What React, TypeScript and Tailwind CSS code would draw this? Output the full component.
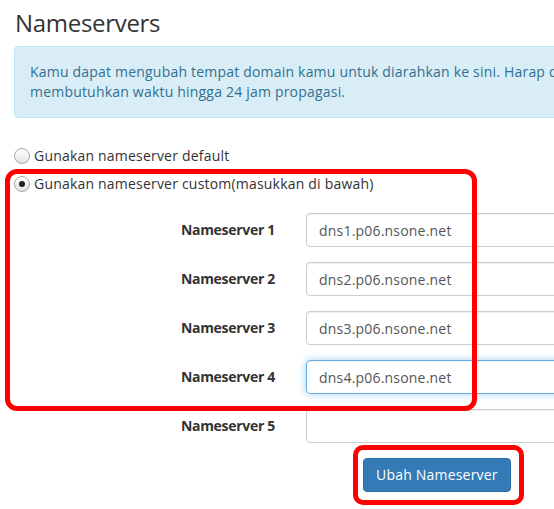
import React from "react";

const servers = [
  "dns1.p06.nsone.net",
  "dns2.p06.nsone.net",
  "dns3.p06.nsone.net",
  "dns4.p06.nsone.net",
  "",
];

function Radio({ checked }: { checked?: boolean }) {
  return (
    <span className="flex h-[16px] w-[16px] shrink-0 items-center justify-center rounded-full border border-[#a7a7a7] bg-gradient-to-b from-[#ffffff] to-[#e4e4e4] shadow-[inset_0_1px_0_rgba(255,255,255,0.8)]">
      {checked && <span className="h-[6px] w-[6px] rounded-full bg-[#222]" />}
    </span>
  );
}

export default function App() {
  return (
    <div
      className="relative h-[509px] w-[554px] overflow-hidden bg-white text-[14px] tracking-[0.2px] text-[#333]"
      style={{ fontFamily: '"Open Sans", "Noto Sans", sans-serif' }}
    >
      <div className="w-[760px]">
        <h2 className="ml-[15px] mt-[10px] text-[24px] font-normal leading-[1.1] tracking-[-0.3px] text-[#333]">
          Nameservers
        </h2>

        <div className="ml-[14px] mt-[10px] rounded-[4px] border border-[#bce8f1] bg-[#d9edf7] px-[15px] py-[15px] leading-[20px] text-[#31708f]">
          <span className="block whitespace-nowrap">
            Kamu dapat mengubah tempat domain kamu untuk diarahkan ke sini. Harap diingat bahwa perubahan
          </span>
          <span className="block whitespace-nowrap">membutuhkan waktu hingga 24 jam propagasi.</span>
        </div>

        <div className="ml-[14px] mt-[29px] flex flex-col gap-[11px]">
          <label className="flex h-[17px] items-center gap-[4px] leading-[20px]">
            <Radio />
            <span>Gunakan nameserver default</span>
          </label>
          <label className="flex h-[17px] items-center gap-[4px] leading-[20px]">
            <Radio checked />
            <span>Gunakan nameserver custom(masukkan di bawah)</span>
          </label>
        </div>

        <div className="mt-[21px] flex flex-col gap-[15px]">
          {servers.map((v, i) => (
            <div key={i} className="flex items-center gap-[31px]">
              <span className="w-[275px] text-right font-bold leading-[20px] tracking-[-0.3px]">
                Nameserver {i + 1}
              </span>
              <div
                className={
                  "flex h-[34px] w-[320px] items-center rounded-[4px] border bg-white px-[12px] text-[#555] " +
                  (i === 3
                    ? "border-[#66afe9] shadow-[inset_0_1px_1px_rgba(0,0,0,0.075),0_0_8px_rgba(102,175,233,0.6)]"
                    : "border-[#ccc] shadow-[inset_0_1px_1px_rgba(0,0,0,0.075)]")
                }
              >
                {v}
              </div>
            </div>
          ))}
        </div>

        <div className="mt-[15px] pl-[363px]">
          <button className="h-[34px] rounded-[4px] border border-[#2e6da4] bg-[#337ab7] px-[12px] leading-[20px] text-white">
            Ubah Nameserver
          </button>
        </div>
      </div>

      {/* highlight outlines */}
      <div className="pointer-events-none absolute left-[5px] top-[169px] h-[242px] w-[472px] rounded-[12px] border-[5px] border-[#ff0000]" />
      <div className="pointer-events-none absolute left-[353px] top-[445px] h-[60px] w-[171px] rounded-[10px] border-[5px] border-[#ff0000]" />
    </div>
  );
}
